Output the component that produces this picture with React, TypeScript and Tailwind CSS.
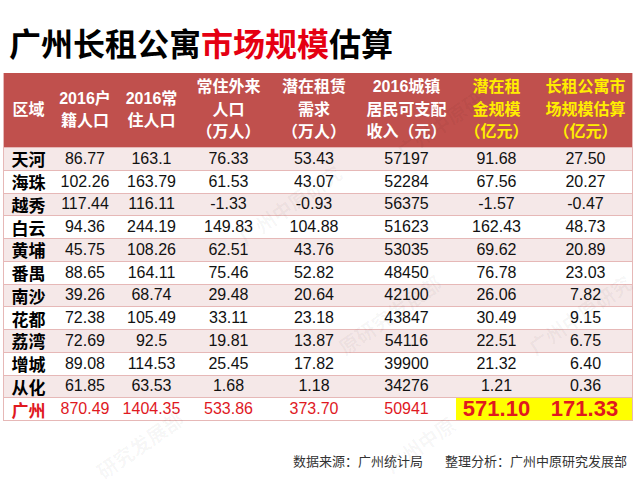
import React from "react";

const rows: [string, string, string, string, string, string, string, string][] = [
  ["天河", "86.77", "163.1", "76.33", "53.43", "57197", "91.68", "27.50"],
  ["海珠", "102.26", "163.79", "61.53", "43.07", "52284", "67.56", "20.27"],
  ["越秀", "117.44", "116.11", "-1.33", "-0.93", "56375", "-1.57", "-0.47"],
  ["白云", "94.36", "244.19", "149.83", "104.88", "51623", "162.43", "48.73"],
  ["黄埔", "45.75", "108.26", "62.51", "43.76", "53035", "69.62", "20.89"],
  ["番禺", "88.65", "164.11", "75.46", "52.82", "48450", "76.78", "23.03"],
  ["南沙", "39.26", "68.74", "29.48", "20.64", "42100", "26.06", "7.82"],
  ["花都", "72.38", "105.49", "33.11", "23.18", "43847", "30.49", "9.15"],
  ["荔湾", "72.69", "92.5", "19.81", "13.87", "54116", "22.51", "6.75"],
  ["增城", "89.08", "114.53", "25.45", "17.82", "39900", "21.32", "6.40"],
  ["从化", "61.85", "63.53", "1.68", "1.18", "34276", "1.21", "0.36"],
];

const headers: { lines: string[]; yellow?: boolean }[] = [
  { lines: ["区域"] },
  { lines: ["2016户", "籍人口"] },
  { lines: ["2016常", "住人口"] },
  { lines: ["常住外来", "人口", "（万人）"] },
  { lines: ["潜在租赁", "需求", "（万人）"] },
  { lines: ["2016城镇", "居民可支配", "收入（元）"] },
  { lines: ["潜在租", "金规模", "（亿元）"], yellow: true },
  { lines: ["长租公寓市", "场规模估算", "（亿元）"], yellow: true },
];

const grid = "grid grid-cols-[49px_64px_69px_85px_86px_99px_81px_97px]";
const font = { fontFamily: '"Liberation Sans", "Noto Sans CJK SC", sans-serif' };
const cjk = { fontFamily: '"Noto Sans CJK SC", sans-serif' };

const marks: { x: number; y: number; t: string }[] = [
  { x: 390, y: 110, t: "广州中原研" },
  { x: 230, y: 190, t: "广州中原研究" },
  { x: 520, y: 300, t: "广州中原研究" },
  { x: 330, y: 300, t: "原研究发展部" },
  { x: 90, y: 430, t: "研究发展部" },
  { x: 380, y: 430, t: "广州中原" },
];

export default function App() {
  return (
    <div className="relative w-[640px] h-[480px] bg-white overflow-hidden" style={font}>
      <div className="pl-[9px] pt-[22px] h-[73px]">
        <h1 className="text-[32px] leading-[40px] font-bold text-black" style={cjk}>
          广州长租公寓<span className="text-[#e50012]">市场规模</span>估算
        </h1>
      </div>

      <div className="ml-[3px] w-[630px] border-x border-[#e6b8b7]">
        <div className={`${grid} h-[74px] bg-[#c0504d]`}>
          {headers.map((h, i) => (
            <div
              key={i}
              className={`flex flex-col items-center justify-center text-[16px] leading-[22.5px] font-bold ${
                h.yellow ? "text-[#ffee00]" : "text-white"
              }`}
            >
              {h.lines.map((l, j) => (
                <span key={j} className="whitespace-nowrap">
                  {l}
                </span>
              ))}
            </div>
          ))}
        </div>
        {rows.map((r, i) => (
          <div
            key={r[0]}
            className={`${grid} h-[22.75px] border-t border-[#e6b8b7] ${
              i % 2 === 0 ? "bg-[#f5e8e8]" : "bg-white"
            }`}
          >
            {r.map((c, j) => (
              <div
                key={j}
                className={`flex items-center justify-center leading-none ${
                  j === 0 ? "text-[17px] font-bold text-black" : "text-[16px] text-[#111]"
                }`}
                style={j === 0 ? cjk : undefined}
              >
                {c}
              </div>
            ))}
          </div>
        ))}
        <div className={`${grid} h-[24px] border-y border-[#e6b8b7] bg-white`}>
          <div
            className="flex items-center justify-center text-[17px] font-bold text-[#e0191f] leading-none"
            style={cjk}
          >
            广州
          </div>
          {["870.49", "1404.35", "533.86", "373.70", "50941"].map((v) => (
            <div key={v} className="flex items-center justify-center text-[16px] text-[#e0191f] leading-none">
              {v}
            </div>
          ))}
          <div className="col-span-2 flex bg-[#ffff00] mr-[2px]">
            <div className="w-[81px] flex items-center justify-center text-[22px] font-bold text-[#e0191f] leading-none">
              571.10
            </div>
            <div className="flex-1 flex items-center justify-center text-[22px] font-bold text-[#e0191f] leading-none">
              171.33
            </div>
          </div>
        </div>
      </div>

      <div
        className="flex justify-end gap-[22px] pr-[13px] pt-[32px] text-[13px] leading-[16px] text-[#333]"
        style={cjk}
      >
        <span>数据来源：广州统计局</span>
        <span>整理分析：广州中原研究发展部</span>
      </div>

      {marks.map((m, i) => (
        <span
          key={i}
          aria-hidden="true"
          className="absolute pointer-events-none whitespace-nowrap text-[20px] font-bold text-black/[0.04] -rotate-[35deg]"
          style={{ left: m.x, top: m.y, ...cjk }}
        >
          {m.t}
        </span>
      ))}
    </div>
  );
}
